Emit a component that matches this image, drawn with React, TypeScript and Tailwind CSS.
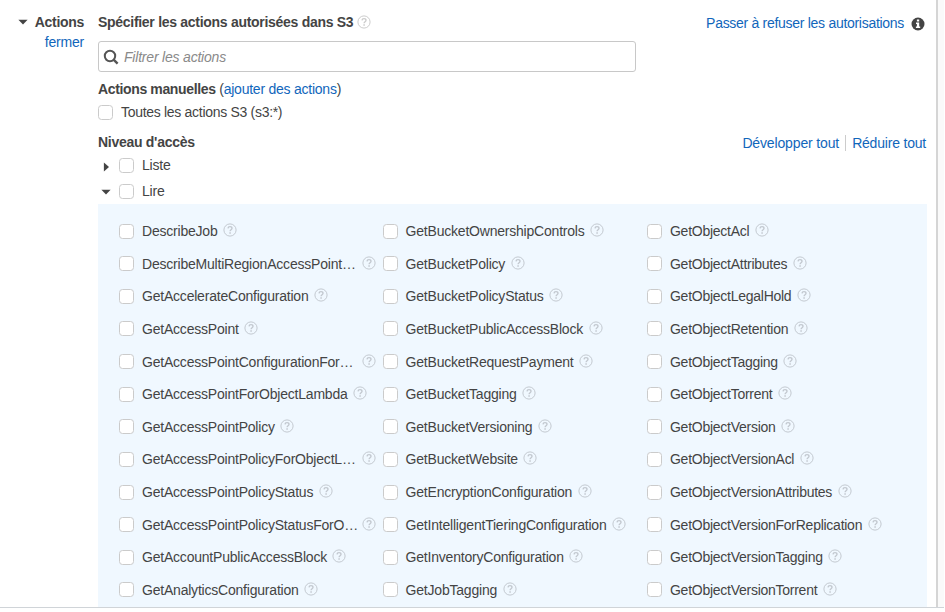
import type { ReactNode } from "react";

const columns: { spacing: string; items: string[] }[] = [
  {
    spacing: "tracking-[-0.21px]",
    items: [
      "DescribeJob",
      "DescribeMultiRegionAccessPoint…",
      "GetAccelerateConfiguration",
      "GetAccessPoint",
      "GetAccessPointConfigurationFor…",
      "GetAccessPointForObjectLambda",
      "GetAccessPointPolicy",
      "GetAccessPointPolicyForObjectL…",
      "GetAccessPointPolicyStatus",
      "GetAccessPointPolicyStatusForO…",
      "GetAccountPublicAccessBlock",
      "GetAnalyticsConfiguration",
    ],
  },
  {
    spacing: "tracking-[-0.21px]",
    items: [
      "GetBucketOwnershipControls",
      "GetBucketPolicy",
      "GetBucketPolicyStatus",
      "GetBucketPublicAccessBlock",
      "GetBucketRequestPayment",
      "GetBucketTagging",
      "GetBucketVersioning",
      "GetBucketWebsite",
      "GetEncryptionConfiguration",
      "GetIntelligentTieringConfiguration",
      "GetInventoryConfiguration",
      "GetJobTagging",
    ],
  },
  {
    spacing: "tracking-[-0.26px]",
    items: [
      "GetObjectAcl",
      "GetObjectAttributes",
      "GetObjectLegalHold",
      "GetObjectRetention",
      "GetObjectTagging",
      "GetObjectTorrent",
      "GetObjectVersion",
      "GetObjectVersionAcl",
      "GetObjectVersionAttributes",
      "GetObjectVersionForReplication",
      "GetObjectVersionTagging",
      "GetObjectVersionTorrent",
    ],
  },
];

function Help({ className = "" }: { className?: string }) {
  return (
    <svg viewBox="0 0 14 14" className={`h-3.5 w-3.5 shrink-0 ${className}`} fill="none">
      <circle cx="7" cy="7" r="6.1" stroke="currentColor" strokeWidth="1" />
      <path d="M5 5.4C5.1 4.1 5.9 3.6 7 3.6s2 .6 2 1.7C9 6.7 7.1 6.7 7.1 8.3" stroke="currentColor" strokeWidth="1.4" />
      <path d="M7.1 9.3v1.5" stroke="currentColor" strokeWidth="1.5" />
    </svg>
  );
}

function Check() {
  return <span className="block h-[15px] w-[15px] shrink-0 rounded-[3.5px] border border-[#cbcbcb] bg-white" />;
}

function Caret({ open }: { open: boolean }) {
  return (
    <svg viewBox="0 0 10 10" className="h-2.5 w-2.5 shrink-0" fill="#444">
      {open ? <path d="M.4 2.7h9.200L5 7.6z" /> : <path d="M2.9.4v9.200L8 5z" />}
    </svg>
  );
}

function Link({ children, className = "" }: { children: ReactNode; className?: string }) {
  return <a className={`text-[#1166bb] ${className}`}>{children}</a>;
}

function ActionItem({ name }: { name: string }) {
  const cut = name.endsWith("…");
  return (
    <div className="flex h-[32.64px] items-center whitespace-nowrap">
      <Check />
      <span className={cut ? "ml-2 w-[214.5px] shrink-0" : "ml-2"}>{name}</span>
      <Help className="mb-[2px] ml-[5.5px] text-[#c3c9d0]" />
    </div>
  );
}

function Level({ name, open }: { name: string; open: boolean }) {
  return (
    <div className="flex shrink-0 items-center pl-[3px]">
      <span className={open ? "mt-px" : "mt-[3px]"}>
        <Caret open={open} />
      </span>
      <span className="ml-2">
        <Check />
      </span>
      <span className="ml-2">{name}</span>
    </div>
  );
}

export default function App() {
  return (
    <div className="h-[612px] w-[945px] overflow-hidden bg-white font-['Liberation_Sans',Arial,sans-serif] text-[14px] leading-5 tracking-[-0.2px] text-[#444]">
      <div className="flex h-[608px] w-[944px] overflow-hidden border-b border-[#d0d4d8] bg-[#fafafa]">
        <div className="flex w-[938px] shrink-0 border-r-2 border-[#d5d5d5] bg-white">
          <div className="flex w-[98px] shrink-0 flex-col items-end pr-3.5 pt-3">
            <div className="flex items-center gap-[7px] font-bold tracking-[-0.3px]">
              <Caret open />
              <span>Actions</span>
            </div>
            <Link>fermer</Link>
          </div>
          <main className="flex w-[829px] shrink-0 flex-col whitespace-nowrap">
            <div className="flex h-[41px] shrink-0 items-start justify-between pt-3">
              <div className="flex items-center font-bold tracking-[-0.29px]">
                <span>Spécifier les actions autorisées dans S3</span>
                <Help className="ml-1 text-[#cccccc]" />
              </div>
              <div className="flex items-center pr-[2px] pt-px">
                <Link className="tracking-[-0.29px]">Passer à refuser les autorisations</Link>
                <svg viewBox="0 0 14 14" className="ml-[7px] mt-0.5 h-3.5 w-3.5">
                  <circle cx="7" cy="7" r="6.5" fill="#444" />
                  <path d="M5.900 2.500h2.300v1.900H5.900zM5 5.500h3.200v4H9.200v1.500H4.900V9.500h1V6.900H5z" fill="#fff" />
                </svg>
              </div>
            </div>
            <div className="flex h-[31px] w-[538px] shrink-0 items-center rounded-[3px] border border-[#c8c8c8] pl-[4px]">
              <svg viewBox="0 0 16 16" className="h-4 w-4" fill="none" stroke="#555">
                <circle cx="7" cy="7" r="5.2" strokeWidth="2" />
                <path d="M10.6 10.6l4 4" strokeWidth="2.4" />
              </svg>
              <span className="ml-[5px] italic text-[#8a8a8a]">Filtrer les actions</span>
            </div>
            <div className="mt-[7px] shrink-0">
              <b className="tracking-[-0.36px]">Actions manuelles</b>
              <span className="tracking-[-0.24px]">
                {" "}
                (<Link>ajouter des actions</Link>)
              </span>
            </div>
            <div className="mt-[3px] flex shrink-0 items-center gap-2">
              <Check />
              <span className="tracking-[-0.3px]">Toutes les actions S3 (s3:*)</span>
            </div>
            <div className="mt-[10px] flex h-[21px] shrink-0 items-start justify-between">
              <b className="tracking-[-0.28px]">Niveau d'accès</b>
              <div className="flex items-center pr-px pt-px">
                <Link className="tracking-[-0.14px]">Développer tout</Link>
                <span className="mx-[6px] h-4 w-px bg-[#ccc]" />
                <Link>Réduire tout</Link>
              </div>
            </div>
            <div className="mt-[2px] flex shrink-0 flex-col gap-[6px]">
              <Level name="Liste" open={false} />
              <Level name="Lire" open />
            </div>
            <div className="mt-[3px] grid h-[420px] shrink-0 grid-cols-[263.6px_264.400px_1fr] content-start bg-[#f0f8ff] pl-[21px] pt-[10.7px]">
              {columns.map(({ spacing, items }) => (
                <div key={items[0]} className={spacing}>
                  {items.map((name) => (
                    <ActionItem key={name} name={name} />
                  ))}
                </div>
              ))}
            </div>
          </main>
        </div>
      </div>
    </div>
  );
}
